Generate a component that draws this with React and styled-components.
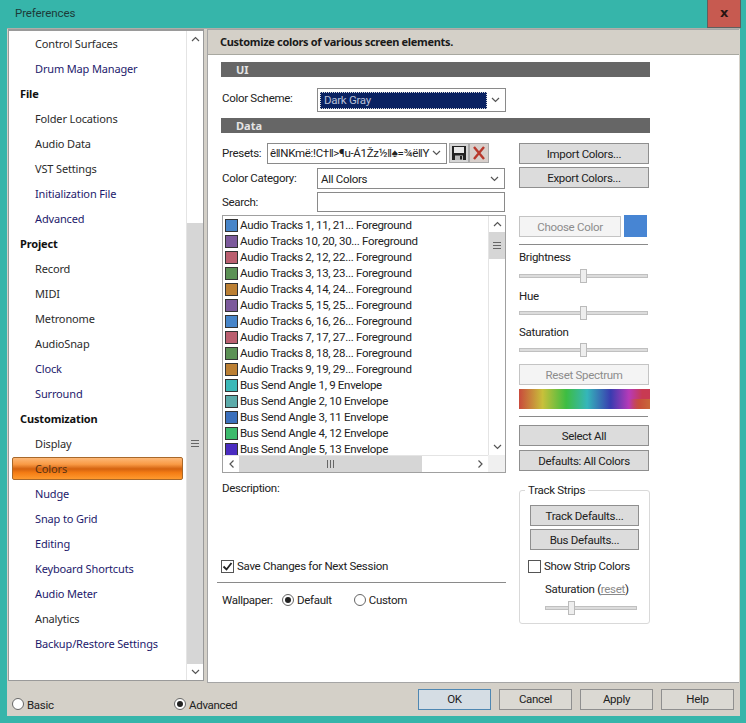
import React from "react";
import styled, { createGlobalStyle } from "styled-components";

const UI_FONT = `"Roboto", "Liberation Sans", sans-serif`;

const Global = createGlobalStyle`
  html, body { margin: 0; padding: 0; width: 746px; height: 723px; overflow: hidden; background: #36b5aa; }
  * { box-sizing: border-box; }
  body { font-family: ${UI_FONT}; font-size: 11.5px; letter-spacing: -0.3px; color: #222; }
`;

const Win = styled.div`
  width: 746px; height: 723px; background: #36b5aa;
  display: flex; flex-direction: column; padding: 0 6px 7px 7px;
`;
const TitleBar = styled.div`
  height: 28px; margin-right: -1px; display: flex; align-items: flex-start; justify-content: space-between;
  flex: none;
`;
const Title = styled.div`
  font-size: 11.5px; letter-spacing: -0.1px; color: #1c3a38; padding: 5px 0 0 8px; line-height: 16px;
`;
const Close = styled.div`
  width: 34px; height: 28px; background: #c75a50; border: 1px solid #5f5f5f; border-top: none;
  display: flex; align-items: center; justify-content: center; font-weight: 700; font-size: 13px; color: #2a1512;
  font-family: "DejaVu Sans", sans-serif; padding-bottom: 3px;
`;
const Dialog = styled.div`
  flex: 1; background: #d4d0c8; display: flex; flex-direction: column; min-height: 0; border-top: 1px solid #b0aea8;
`;
const Main = styled.div`
  height: 653px; flex: none; display: flex; gap: 3px; padding-left: 1px;
`;
const NavBox = styled.div`
  width: 196px; height: 652px; background: #fff; border: 1px solid #9a9a9a; border-top-width: 2px; display: flex;
`;
const NavList = styled.div`
  flex: 1; padding: 0 3px; min-width: 0;
`;
const NavRow = styled.div`
  height: 25px; line-height: 25px; white-space: nowrap; font-family: "Noto Sans", sans-serif; font-size: 11px; letter-spacing: -0.15px;
  padding-left: ${p => (p.$head ? 8 : 23)}px;
  font-weight: ${p => (p.$head ? 700 : 400)};
  color: ${p => (p.$head ? "#111" : p.$link ? "#1d1a6c" : "#2b2b2b")};
  ${p => p.$active && `
    width: 100%; height: 23px; line-height: 22px; border-radius: 2px; border: 1px solid #a8682a;
    padding-left: 22px; color: #5a3414;
    background: linear-gradient(180deg,#fdb877 0%,#f99a45 30%,#d4620f 52%,#f47c14 70%,#ff9a2e 100%);
  `}
`;
const ActiveWrap = styled.div`height: 25px; display: flex; align-items: center;`;
const VBar = styled.div`
  width: 17px; flex: none; display: flex; flex-direction: column; border-left: 1px solid #e4e4e4;
`;
const ScrollBtn = styled.div`
  height: 16px; flex: none; display: flex; align-items: center; justify-content: center; background: #fff; color: #555;
`;
const Track = styled.div`
  height: ${p => p.$h}px; flex: ${p => (p.$h ? "none" : 1)}; background: #fff;
`;
const Thumb = styled.div`
  flex: ${p => (p.$h ? "none" : 1)}; height: ${p => (p.$h ? `${p.$h}px` : "auto")}; background: #d6d6d6; display: flex; align-items: center; justify-content: center;
`;
const Grip = styled.div`
  width: 8px; height: 7px; border-top: 1px solid #666; border-bottom: 1px solid #666;
  &::after { content: ""; display: block; height: 1px; margin-top: 2px; background: #666; }
`;
const Panel = styled.div`
  width: 532px; height: 654px; background: #fff; border: 1px solid #a5a5a5; border-right: none;
  display: flex; flex-direction: column;
`;
const Header = styled.div`
  height: 25px; flex: none; background: #d4d0c8; border-bottom: 1px solid #a8a8a0;
  font-family: "Noto Sans", sans-serif; font-weight: 700; font-size: 11px; letter-spacing: -0.32px; line-height: 24px; padding-left: 12px; color: #1a1a1a;
`;
const Body = styled.div`
  padding: 7px 0 0 13px; display: flex; flex-direction: column; flex: 1;
`;
const SectionBar = styled.div`
  width: 429px; height: 15px; background: #666; color: #e4e4e4; font-family: "Noto Sans", sans-serif; font-weight: 700; font-size: 11px; letter-spacing: 0; line-height: 15px; padding-left: 15px;
`;
const Row = styled.div`
  display: flex; align-items: center;
`;
const SchemeRow = styled(Row)`
  height: 24px; margin-top: 11px; margin-bottom: 6px; padding-left: 1px;
`;
const Label = styled.div`
  line-height: 16px; color: #222; white-space: nowrap; width: ${p => (p.$w ? `${p.$w}px` : "auto")}; flex: none;
  margin-top: ${p => (p.$up ? `-${p.$up}px` : 0)};
`;
const Select = styled.div`
  width: ${p => p.$w}px; height: ${p => p.$h}px; background: #fff; border: 1px solid #8a8a8a;
  display: flex; align-items: center; justify-content: space-between; padding: 0 5px 0 ${p => p.$pl ?? 3}px;
  white-space: nowrap; overflow: hidden; flex: none; color: #222;
`;
const Focused = styled.div`
  width: 167px; height: 17px; margin-left: -1px; background: #0a2262; color: #b8c0d8; border: 1px dotted #d8d8d8; line-height: 15px; padding-left: 3px;
`;
const Columns = styled.div`
  display: grid; grid-template-columns: 298px 131px;
`;
const LeftCol = styled.div`
  display: flex; flex-direction: column; padding-top: 9px;
`;
const RightCol = styled.div`
  display: flex; flex-direction: column; padding-top: 10px;
`;
const PresetRow = styled(Row)`
  padding-left: 1px; height: 22px; margin-bottom: 4px;
`;
const IconBtn = styled.div`
  width: 20px; height: 20px; background: ${p => p.$bg || "#d6d6d6"}; border: 1px solid #aaa; display: flex; align-items: center; justify-content: center; flex: none;
  margin-left: ${p => p.$ml || 0}px;
`;
const FieldRow = styled(Row)`
  padding-left: 1px; height: ${p => p.$h}px; margin-bottom: ${p => p.$mb || 0}px;
`;
const SearchBox = styled.div`
  width: 188px; height: 20px; border: 1px solid #8a8a8a; background: #fff; flex: none;
`;
const ListBox = styled.div`
  margin-left: 1px; width: 284px; height: 258px; border: 1px solid #a0a0a0; display: grid;
  grid-template-columns: 1fr 17px; grid-template-rows: 1fr 17px;
`;
const ListItems = styled.div`
  overflow: hidden; padding: 1px 0 0 2px;
`;
const Item = styled.div`
  height: 16px; display: flex; align-items: center; gap: 2px; white-space: nowrap; color: #222;
`;
const Swatch = styled.div`
  width: 13px; height: 13px; background: ${p => p.$c}; border: 1px solid #333; flex: none;
`;
const ListV = styled.div`
  display: flex; flex-direction: column; border-left: 1px solid #e4e4e4;
`;
const ListH = styled.div`
  display: flex; height: 17px; border-top: 1px solid #e4e4e4;
`;
const HBtn = styled.div`
  width: 16px; flex: none; display: flex; align-items: center; justify-content: center; color: #555;
`;
const HThumb = styled.div`
  width: 183px; flex: none; background: #d6d6d6; display: flex; align-items: center; justify-content: center;
`;
const HGrip = styled.div`
  width: 7px; height: 8px; border-left: 1px solid #666; border-right: 1px solid #666; display: flex; justify-content: center;
  &::after { content: ""; width: 1px; background: #666; }
`;
const Corner = styled.div`background: #f0f0f0;`;
const Desc = styled(Label)`
  margin: 7px 0 0 1px;
`;
const CheckRow = styled(Row)`
  margin-top: 63px; gap: 3px; height: 14px;
`;
const Check = styled.div`
  width: 13px; height: 13px; border: 1px solid #555; background: #fff; flex: none; display: flex; align-items: center; justify-content: center;
`;
const PanelRule = styled.div`
  height: 1px; background: #8a8a8a; margin: ${p => p.$m || "0"};
  width: ${p => p.$w}px;
`;
const WallRow = styled(Row)`
  margin: 9px 0 0 1px; height: 16px;
`;
const RadioDot = styled.div`
  width: 12px; height: 12px; border-radius: 50%; border: 1px solid #666; background: #fff; flex: none;
  display: flex; align-items: center; justify-content: center; margin-left: ${p => p.$ml || 0}px;
  &::after { content: ""; width: 6px; height: 6px; border-radius: 50%; background: ${p => (p.$on ? "#222" : "transparent")}; }
`;
const RadioLabel = styled.div`
  line-height: 16px; margin-left: 3px; white-space: nowrap; color: #222; padding-top: ${p => p.$pt || 0}px;
`;
const Btn = styled.div`
  width: ${p => p.$w || 130}px; height: 21px; flex: none; background: ${p => (p.$off ? "#f4f4f4" : "#dcdcdc")};
  border: 1px solid ${p => (p.$off ? "#c4c4c4" : "#8f8f8f")};
  color: ${p => (p.$off ? "#8c8c8c" : "#222")};
  display: flex; align-items: center; justify-content: center; white-space: nowrap; margin-top: ${p => p.$mt || 0}px;
`;
const ChooseRow = styled(Row)`
  margin-top: 27px; gap: 3px; align-items: flex-end; height: 22px;
`;
const ColorBox = styled.div`
  width: 23px; height: 22px; background: #4785d3; flex: none;
`;
const SliderLabel = styled(Label)`
  margin-top: ${p => p.$mt}px;
`;
const SliderWrap = styled.div`
  width: ${p => p.$w || 129}px; height: 14px; margin-top: ${p => p.$mt || 0}px; margin-left: ${p => p.$ml || 0}px;
  display: flex; align-items: center; position: relative; flex: none; align-self: flex-start;
`;
const SliderTrack = styled.div`
  width: 100%; height: 4px; background: #dcdcdc; border: 1px solid #c0c0c0;
`;
const SliderThumb = styled.div`
  position: absolute; left: ${p => p.$x}px; top: 0; width: 7px; height: 14px; background: #eee; border: 1px solid #bbb;
`;
const Spectrum = styled.div`
  width: 131px; height: 20px; margin-top: 4px;
  background:
    linear-gradient(90deg, transparent 84%, #c8503a 92%, #c8683a 100%) bottom / 100% 50% no-repeat,
    linear-gradient(90deg,#c94a3c 0%,#c8c03a 18%,#3dbd42 36%,#35b6ba 52%,#3a3cb0 70%,#b73ab8 84%,#c83a52 94%,#c83a52 100%);
`;
const GroupBox = styled.div`
  width: 131px; height: 134px; margin-top: 19px; border: 1px solid #d9d9d9; border-radius: 3px; position: relative;
  display: flex; flex-direction: column; align-items: center; padding-top: 14px;
`;
const Legend = styled.div`
  position: absolute; left: 5px; top: -8px; background: #fff; padding: 0 3px; line-height: 15px; color: #222;
`;
const StripRow = styled(Row)`
  align-self: flex-start; padding-left: 8px; gap: 3px; margin-top: 9px; height: 14px;
`;
const SatLabel = styled.div`
  align-self: flex-start; padding-left: 25px; margin-top: 8px; line-height: 16px; color: #222; white-space: nowrap;
`;
const ResetLink = styled.span`color: #8a8a8a; text-decoration: underline;`;
const Footer = styled.div`
  flex: 1; display: flex; align-items: center; padding: 0 6px 0 5px;
`;
const FootRadio = styled(Row)`
  width: ${p => p.$w}px; flex: none; padding-top: 10px;
`;
const FootButtons = styled.div`
  display: flex; gap: 8px; margin-left: auto;
`;
const DlgBtn = styled.div`
  width: 73px; height: 21px; background: ${p => (p.$def ? "#d5dde4" : "#dbd9d3")}; border: 1px solid ${p => (p.$def ? "#4f87b2" : "#8f8f8f")};
  color: #222; display: flex; align-items: center; justify-content: center;
`;

const Chev = ({ dir = "down", c = "#555" }) => {
  const r = { down: 0, up: 180, left: 90, right: -90 }[dir];
  return (
    <svg width="9" height="6" viewBox="0 0 9 6" style={{ transform: `rotate(${r}deg)`, flex: "none" }}>
      <path d="M1 1l3.5 3.5L8 1" fill="none" stroke={c} strokeWidth="1.2" />
    </svg>
  );
};

const SaveIcon = () => (
  <svg width="16" height="16" viewBox="0 0 16 16">
    <path d="M1 1h14v14H1z" fill="#222" />
    <rect x="3" y="2" width="10" height="6" fill="#e8e8e8" />
    <rect x="4" y="10.5" width="8" height="4.5" fill="#bbb" />
    <rect x="9" y="11" width="2" height="3.5" fill="#222" />
  </svg>
);
const XIcon = () => (
  <svg width="16" height="16" viewBox="0 0 16 16">
    <path d="M3 2l10 12M13 2L3 14" stroke="#b8382c" strokeWidth="2.4" />
  </svg>
);
const Tick = () => (
  <svg width="11" height="11" viewBox="0 0 11 11">
    <path d="M1.5 5.5l3 3L9.5 2" fill="none" stroke="#222" strokeWidth="1.8" />
  </svg>
);

const nav = [
  ["Control Surfaces"], ["Drum Map Manager", "l"], ["File", "h"], ["Folder Locations"], ["Audio Data"], ["VST Settings"],
  ["Initialization File", "l"], ["Advanced", "l"], ["Project", "h"], ["Record"], ["MIDI"], ["Metronome"], ["AudioSnap"],
  ["Clock", "l"], ["Surround", "l"], ["Customization", "h"], ["Display"], ["Colors", "a"], ["Nudge", "l"], ["Snap to Grid", "l"],
  ["Editing", "l"], ["Keyboard Shortcuts", "l"], ["Audio Meter", "l"], ["Analytics"], ["Backup/Restore Settings", "l"],
];

const items = [
  ["Audio Tracks 1, 11, 21... Foreground", "#4785c9"], ["Audio Tracks 10, 20, 30... Foreground", "#7c5a9c"],
  ["Audio Tracks 2, 12, 22... Foreground", "#bb5f70"], ["Audio Tracks 3, 13, 23... Foreground", "#5b9155"],
  ["Audio Tracks 4, 14, 24... Foreground", "#bb7f33"], ["Audio Tracks 5, 15, 25... Foreground", "#7c5a9c"],
  ["Audio Tracks 6, 16, 26... Foreground", "#4785c9"], ["Audio Tracks 7, 17, 27... Foreground", "#bb5f70"],
  ["Audio Tracks 8, 18, 28... Foreground", "#5b9155"], ["Audio Tracks 9, 19, 29... Foreground", "#bb7f33"],
  ["Bus Send Angle 1, 9 Envelope", "#3bb8b8"], ["Bus Send Angle 2, 10 Envelope", "#5cabaa"],
  ["Bus Send Angle 3, 11 Envelope", "#3b70bd"], ["Bus Send Angle 4, 12 Envelope", "#3cba6c"],
  ["Bus Send Angle 5, 13 Envelope", "#4a2cc0"],
];

export default function App() {
  return (
    <>
      <Global />
      <Win>
        <TitleBar>
          <Title>Preferences</Title>
          <Close>x</Close>
        </TitleBar>
        <Dialog>
          <Main>
            <NavBox>
              <NavList>
                {nav.map(([t, k]) =>
                  k === "a" ? (
                    <ActiveWrap key={t}><NavRow $active>{t}</NavRow></ActiveWrap>
                  ) : (
                    <NavRow key={t} $head={k === "h"} $link={k === "l"}>{t}</NavRow>
                  )
                )}
              </NavList>
              <VBar>
                <ScrollBtn><Chev dir="up" /></ScrollBtn>
                <Track $h={176} />
                <Thumb><Grip /></Thumb>
                <ScrollBtn><Chev /></ScrollBtn>
              </VBar>
            </NavBox>
            <Panel>
              <Header>Customize colors of various screen elements.</Header>
              <Body>
                <SectionBar>UI</SectionBar>
                <SchemeRow>
                  <Label $w={95} $up={4}>Color Scheme:</Label>
                  <Select $w={189} $h={24} $pl={3}>
                    <Focused>Dark Gray</Focused>
                    <Chev />
                  </Select>
                </SchemeRow>
                <SectionBar>Data</SectionBar>
                <Columns>
                  <LeftCol>
                    <PresetRow>
                      <Label $w={45} $up={1}>Presets:</Label>
                      <Select $w={180} $h={21} $pl={2}>
                        <span>ê‖NKmë:!C†‖&gt;¶u-Á1Žz½‖♠=¾ë‖Y</span>
                        <Chev />
                      </Select>
                      <IconBtn $ml={2}><SaveIcon /></IconBtn>
                      <IconBtn $bg="#d8cfcb"><XIcon /></IconBtn>
                    </PresetRow>
                    <FieldRow $h={21} $mb={3}>
                      <Label $w={95} $up={1}>Color Category:</Label>
                      <Select $w={188} $h={21} $pl={3}>
                        <span>All Colors</span>
                        <Chev />
                      </Select>
                    </FieldRow>
                    <FieldRow $h={20} $mb={3}>
                      <Label $w={95}>Search:</Label>
                      <SearchBox />
                    </FieldRow>
                    <ListBox>
                      <ListItems>
                        {items.map(([t, c]) => (
                          <Item key={t}><Swatch $c={c} />{t}</Item>
                        ))}
                      </ListItems>
                      <ListV>
                        <ScrollBtn><Chev dir="up" /></ScrollBtn>
                        <Thumb $h={27}><Grip /></Thumb>
                        <Track />
                        <ScrollBtn><Chev /></ScrollBtn>
                      </ListV>
                      <ListH>
                        <HBtn><Chev dir="left" /></HBtn>
                        <HThumb><HGrip /></HThumb>
                        <Track />
                        <HBtn><Chev dir="right" /></HBtn>
                      </ListH>
                      <Corner />
                    </ListBox>
                    <Desc>Description:</Desc>
                    <CheckRow>
                      <Check><Tick /></Check>
                      <Label>Save Changes for Next Session</Label>
                    </CheckRow>
                    <PanelRule $w={289} $m="9px 0 0 -4px" />
                    <WallRow>
                      <Label $w={60}>Wallpaper:</Label>
                      <RadioDot $on />
                      <RadioLabel>Default</RadioLabel>
                      <RadioDot $ml={22} />
                      <RadioLabel>Custom</RadioLabel>
                    </WallRow>
                  </LeftCol>
                  <RightCol>
                    <Btn>Import Colors...</Btn>
                    <Btn $mt={3}>Export Colors...</Btn>
                    <ChooseRow>
                      <Btn $w={102} $off>Choose Color</Btn>
                      <ColorBox />
                    </ChooseRow>
                    <PanelRule $w={129} $m="7px 0 0 0" />
                    <SliderLabel $mt={4}>Brightness</SliderLabel>
                    <SliderWrap $mt={4}><SliderTrack /><SliderThumb $x={61} /></SliderWrap>
                    <SliderLabel $mt={5}>Hue</SliderLabel>
                    <SliderWrap $mt={2}><SliderTrack /><SliderThumb $x={61} /></SliderWrap>
                    <SliderLabel $mt={4}>Saturation</SliderLabel>
                    <SliderWrap $mt={3}><SliderTrack /><SliderThumb $x={61} /></SliderWrap>
                    <Btn $off $mt={7}>Reset Spectrum</Btn>
                    <Spectrum />
                    <PanelRule $w={129} $m="7px 0 0 0" />
                    <Btn $mt={8}>Select All</Btn>
                    <Btn $mt={4}>Defaults: All Colors</Btn>
                    <GroupBox>
                      <Legend>Track Strips</Legend>
                      <Btn $w={109}>Track Defaults...</Btn>
                      <Btn $w={109} $mt={3}>Bus Defaults...</Btn>
                      <StripRow>
                        <Check />
                        <Label>Show Strip Colors</Label>
                      </StripRow>
                      <SatLabel>Saturation (<ResetLink>reset</ResetLink>)</SatLabel>
                      <SliderWrap $w={92} $mt={4} $ml={25}>
                        <SliderTrack /><SliderThumb $x={23} />
                      </SliderWrap>
                    </GroupBox>
                  </RightCol>
                </Columns>
              </Body>
            </Panel>
          </Main>
          <Footer>
            <FootRadio $w={162}><RadioDot /><RadioLabel $pt={1}>Basic</RadioLabel></FootRadio>
            <FootRadio $w={120}><RadioDot $on /><RadioLabel $pt={1}>Advanced</RadioLabel></FootRadio>
            <FootButtons>
              <DlgBtn $def>OK</DlgBtn>
              <DlgBtn>Cancel</DlgBtn>
              <DlgBtn>Apply</DlgBtn>
              <DlgBtn>Help</DlgBtn>
            </FootButtons>
          </Footer>
        </Dialog>
      </Win>
    </>
  );
}
